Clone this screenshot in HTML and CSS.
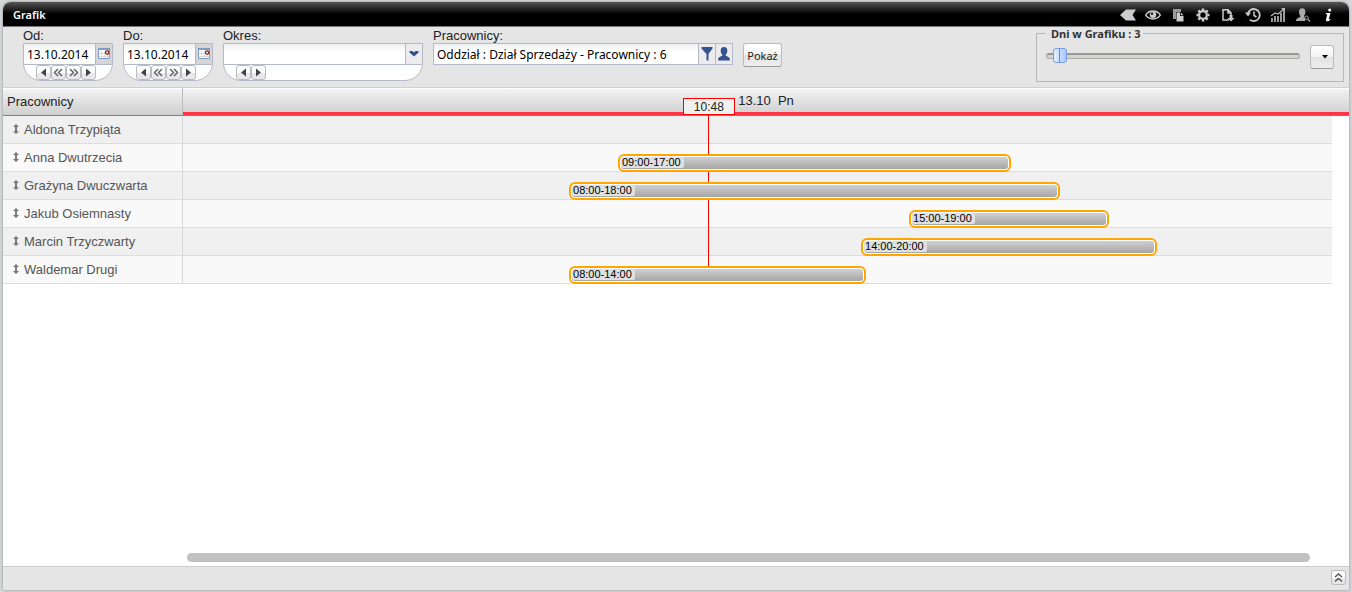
FILE: index.html
```html
<!DOCTYPE html>
<html lang="pl">
<head>
<meta charset="utf-8">
<title>Grafik</title>
<link rel="stylesheet" href="styles.css">
</head>
<body>
<svg class="defs" aria-hidden="true">
  <symbol id="prev" viewBox="0 0 15 15"><path d="M10 3.500v8L5 7.500z" fill="#444"/></symbol>
  <symbol id="next" viewBox="0 0 15 15"><path d="M5 3.500v8l5-4z" fill="#444"/></symbol>
  <symbol id="prev2" viewBox="0 0 15 15"><path d="M7 4L3.500 7.500 7 11M11 4L7.500 7.500 11 11" fill="none" stroke="#666" stroke-width="1.500"/></symbol>
  <symbol id="next2" viewBox="0 0 15 15"><path d="M4 4l3.500 3.500L4 11M8 4l3.500 3.500L8 11" fill="none" stroke="#666" stroke-width="1.500"/></symbol>
  <symbol id="calendar" viewBox="0 0 14 14"><path d="M1.500 1.500h11v10h-11z" fill="#fff" stroke="#7f9cc4"/><path d="M1 1h12v2H1z" fill="#7f9cc4"/><path d="M4.500 4v7M7.500 4v7M10.500 4v7M2 6.500h10M2 9.500h10" stroke="#dadada"/><circle cx="10.200" cy="5.500" r="1.700" fill="#fff" stroke="#8c1010" stroke-width="1.200"/></symbol>
  <symbol id="updown" viewBox="0 0 8 10"><path d="M4 0l3 3H5v4h2l-3 3-3-3h2V3H1z" fill="#777"/></symbol>
</svg>
<div class="window">
  <header class="titlebar">
    <h1 class="title">Grafik</h1>
    <nav class="tools" aria-label="Narzędzia">
      <button class="tool" aria-label="Wstecz"><svg viewBox="0 0 16 16"><path d="M0 8l6-5.500h10L12.500 8l3.500 5.500H6z"/></svg></button>
      <button class="tool" aria-label="Podgląd"><svg viewBox="0 0 16 16"><path d="M.7 8.200C4 2.700 12 2.700 15.300 8.200 12 13.200 4 13.200.7 8.200z" fill="none" stroke="#ccc" stroke-width="1.500"/><circle cx="8" cy="7.700" r="3.300"/><circle cx="7" cy="6.700" r="1.300" fill="#222"/></svg></button>
      <button class="tool" aria-label="Kopiuj"><svg viewBox="0 0 16 16"><path d="M3 2h8v3H6v7H3z" fill="#999"/><path d="M6.500 5.500H10V9h3.500v5.500h-7zM10.800 5.500l2.700 2.700h-2.700z"/></svg></button>
      <button class="tool" aria-label="Ustawienia"><svg viewBox="0 0 16 16"><circle cx="8" cy="8" r="3.800" fill="none" stroke="#ccc" stroke-width="2.200"/><path d="M8 1.500v2M8 12.500v2M1.500 8h2M12.500 8h2M3.400 3.400l1.400 1.400M11.200 11.200l1.400 1.400M3.400 12.600l1.400-1.400M11.200 4.800l1.400-1.400" stroke="#ccc" stroke-width="2.600"/></svg></button>
      <button class="tool" aria-label="Pobierz"><svg viewBox="0 0 16 16"><path d="M9 13H3V2.700h5l3 3V8M8 3v3h3" fill="none" stroke="#ccc" stroke-width="1.500"/><path d="M9.500 8h3v3h2L11 14.500 7.500 11h2z"/></svg></button>
      <button class="tool" aria-label="Historia"><svg viewBox="0 0 16 16"><path d="M2.800 7a6 6 0 1 1 2 5.600" fill="none" stroke="#ccc" stroke-width="1.800"/><path d="M0 5.500h6L3 9.500z"/><path d="M9 4.500V8.500l2.500 1.500" fill="none" stroke="#ccc" stroke-width="1.500"/></svg></button>
      <button class="tool" aria-label="Statystyki"><svg viewBox="0 0 16 16"><path d="M1 11h2v4H1zM4 9h2v6H4zM7 9h2v6H7zM10 6h2v9h-2zM13 4h2v11h-2z" fill="#999"/><path d="M1 9l4-3 3 1 6-5" fill="none" stroke="#bbb" stroke-width="1.200"/><path d="M11 1h4v4z" fill="#bbb"/></svg></button>
      <button class="tool" aria-label="Użytkownik"><svg viewBox="0 0 16 16"><path d="M4 5a3.200 3.700 0 0 1 6.400 0c0 2-.9 3.200-1.400 3.800v1l2 1-1 3.200H1c0-2.500 1.500-3 4.300-4.100v-1C4.800 8.200 4 7 4 5z" fill="#aaa"/><circle cx="11.500" cy="10.800" r="1.800" fill="#111" stroke="#999"/><path d="M12.800 12.200L15 14.500" stroke="#999" stroke-width="1.500"/></svg></button>
      <button class="tool" aria-label="Informacje"><svg viewBox="0 0 16 16"><circle cx="9.700" cy="3" r="1.500" fill="#fff"/><path d="M6 6h4.500l-1.800 6.500 1.800-.6-.3 1C8.500 14.500 5.500 15 6 12.500L7.300 7.300H5.700z" fill="#fff"/></svg></button>
    </nav>
  </header>

  <form class="toolbar">
    <div class="field">
      <label for="from">Od:</label>
      <div class="group date">
        <div class="inputrow"><input id="from" type="text" value="13.10.2014"><button type="button" class="addon cal" aria-label="Kalendarz"><svg class="i14"><use href="#calendar"/></svg></button></div>
        <div class="pager">
          <button type="button" aria-label="Poprzedni dzień"><svg><use href="#prev"/></svg></button><button type="button" aria-label="Poprzedni tydzień"><svg><use href="#prev2"/></svg></button><button type="button" aria-label="Następny tydzień"><svg><use href="#next2"/></svg></button><button type="button" aria-label="Następny dzień"><svg><use href="#next"/></svg></button>
        </div>
      </div>
    </div>
    <div class="field">
      <label for="to">Do:</label>
      <div class="group date">
        <div class="inputrow"><input id="to" type="text" value="13.10.2014"><button type="button" class="addon cal" aria-label="Kalendarz"><svg class="i14"><use href="#calendar"/></svg></button></div>
        <div class="pager">
          <button type="button" aria-label="Poprzedni dzień"><svg><use href="#prev"/></svg></button><button type="button" aria-label="Poprzedni tydzień"><svg><use href="#prev2"/></svg></button><button type="button" aria-label="Następny tydzień"><svg><use href="#next2"/></svg></button><button type="button" aria-label="Następny dzień"><svg><use href="#next"/></svg></button>
        </div>
      </div>
    </div>
    <div class="field">
      <label for="period">Okres:</label>
      <div class="group period">
        <div class="inputrow"><select id="period"><option></option></select><span class="addon"><svg class="i14" viewBox="0 0 14 14"><path d="M2.500 4h3L7 5.500 8.500 4h3v1.500L7 9.500 2.500 5.500z" fill="#2f4f8f"/></svg></span></div>
        <div class="pager">
          <button type="button" aria-label="Poprzedni okres"><svg><use href="#prev"/></svg></button><button type="button" aria-label="Następny okres"><svg><use href="#next"/></svg></button>
        </div>
      </div>
    </div>
    <div class="field">
      <label for="staff">Pracownicy:</label>
      <div class="group staff">
        <div class="inputrow"><input id="staff" type="text" value="Oddział : Dział Sprzedaży - Pracownicy : 6"><button type="button" class="addon" aria-label="Filtr"><svg class="i14" viewBox="0 0 14 14"><path d="M1.500 0h11v1.500L8.500 7v6.500h-2V7l-5-5.500z" fill="#34538f"/></svg></button><button type="button" class="addon" aria-label="Pracownik"><svg class="i14" viewBox="0 0 14 14"><path d="M7 0c2.200 0 3.500 1.500 3.300 4C10.200 6 9.500 7 8.700 7.700v1C11 9.600 13 10 13 13.500H1C1 10 3 9.600 5.300 8.700v-1C4.500 7 3.800 6 3.700 4 3.500 1.500 4.800 0 7 0z" fill="#34538f"/></svg></button></div>
      </div>
    </div>
    <button type="button" class="btn show">Pokaż</button>
    <fieldset class="days">
      <legend><label for="days">Dni w Grafiku : 3</label></legend>
      <input id="days" class="slider" type="range" min="1" max="75" value="3">
      <button type="button" class="btn menu" aria-label="Menu"><svg class="caret" viewBox="0 0 6 4"><path d="M0 0h6L3 3.500z"/></svg></button>
    </fieldset>
  </form>

  <main class="schedule">
    <table class="grid">
      <colgroup><col class="c-name"><col><col class="c-gutter"></colgroup>
      <thead>
        <tr><th class="h-name" scope="col">Pracownicy</th>
        <th class="h-day" colspan="2" scope="col">13.10 &nbsp;Pn<div class="now" style="left:45.1%">10:48</div></th></tr>
      </thead>
      <tbody>
        <tr><th scope="row"><svg class="grip"><use href="#updown"/></svg>Aldona Trzypiąta</th><td class="lane"></td><td class="gutter"></td></tr>
        <tr><th scope="row"><svg class="grip"><use href="#updown"/></svg>Anna Dwutrzecia</th><td class="lane"><div class="bar" style="left:37.86%;width:34.2%"><span>09:00-17:00</span></div></td><td class="gutter"></td></tr>
        <tr><th scope="row"><svg class="grip"><use href="#updown"/></svg>Grażyna Dwuczwarta</th><td class="lane"><div class="bar" style="left:33.6%;width:42.73%"><span>08:00-18:00</span></div></td><td class="gutter"></td></tr>
        <tr><th scope="row"><svg class="grip"><use href="#updown"/></svg>Jakub Osiemnasty</th><td class="lane"><div class="bar" style="left:63.19%;width:17.4%"><span>15:00-19:00</span></div></td><td class="gutter"></td></tr>
        <tr><th scope="row"><svg class="grip"><use href="#updown"/></svg>Marcin Trzyczwarty</th><td class="lane"><div class="bar" style="left:59.01%;width:25.76%"><span>14:00-20:00</span></div></td><td class="gutter"></td></tr>
        <tr><th scope="row"><svg class="grip"><use href="#updown"/></svg>Waldemar Drugi</th><td class="lane"><div class="bar" style="left:33.6%;width:25.85%"><span>08:00-14:00</span></div></td><td class="gutter"></td></tr>
      </tbody>
    </table>
    <div class="scrollbar"></div>
  </main>

  <footer class="footer">
    <button type="button" class="expand" aria-label="Rozwiń"><svg viewBox="0 0 15 15"><path d="M4 7l3.500-3L11 7M4 11.500l3.500-3 3.500 3" fill="none" stroke="#555" stroke-width="1.500"/></svg></button>
  </footer>
</div>
</body>
</html>
```
FILE: styles.css
```css
* { box-sizing: border-box; }

body {
  margin: 0;
  padding: 2px 3px;
  background: #d4d8d8;
  font-family: "Liberation Sans", Arial, sans-serif;
  font-size: 13px;
  color: #222;
}

button { margin: 0; padding: 0; font: inherit; }
svg { display: block; }
.defs { display: none; }

.window {
  display: flex;
  flex-direction: column;
  min-height: calc(100vh - 4px);
  border-radius: 8px 8px 0 0;
  background: #fff;
  box-shadow: 0 0 3px #888;
}

/* Title bar */
.titlebar {
  display: flex;
  align-items: center;
  justify-content: space-between;
  height: 24px;
  padding: 0 13px 0 10px;
  border-radius: 8px 8px 0 0;
  background: linear-gradient(#555, #111 40%, #000 50%);
}
.title {
  margin: 0;
  font: 600 11px "Noto Sans", sans-serif;
  color: #fff;
}
.tools { display: flex; gap: 9px; padding-top: 2px; }
.tool {
  width: 16px;
  height: 16px;
  border: 0;
  background: none;
}
.tool svg { width: 16px; height: 16px; fill: #ccc; }

/* Toolbar */
.toolbar {
  display: flex;
  align-items: flex-start;
  gap: 10px;
  height: 61px;
  padding: 2px 5px 0 20px;
  border-top: 1px solid #777;
  background: #e5e5e5;
}
.field > label { display: block; height: 14px; line-height: 14px; }
.group {
  overflow: hidden;
  border: 1px solid #b5b8c8;
  border-radius: 0 0 18px 18px;
  background: #fff;
}
.date { width: 90px; }
.period { width: 200px; }
.staff { width: 300px; border-radius: 0; }
.inputrow {
  display: flex;
  height: 20px;
  background: linear-gradient(#eef1f1, #fff 8px);
}
.inputrow input, .inputrow select {
  flex: 1;
  min-width: 0;
  padding: 0 3px;
  border: 0;
  background: none;
  font: 12px "Noto Sans", sans-serif;
  color: #000;
}
.inputrow select { appearance: none; }
.addon {
  display: flex;
  align-items: center;
  justify-content: center;
  width: 17px;
  border: 0;
  border-left: 1px solid #b5b8c8;
  background: #ececee;
}
.cal { background: #d5d5d8; }
.i14 { width: 14px; height: 14px; flex: none; }
.pager {
  display: flex;
  height: 16px;
  padding-left: 12px;
  border-top: 1px solid #b5b8c8;
}
.pager button, .expand {
  width: 15px;
  height: 15px;
  border: 1px solid #bbb;
  border-radius: 3px;
  background: linear-gradient(#fff 50%, #e8e8e8 50%);
}
.pager svg, .expand svg { width: 15px; height: 15px; margin: -1px; }

.btn {
  border: 1px solid #bbb;
  border-bottom-color: #999;
  border-radius: 3px;
  background: linear-gradient(#fff, #f3f3f3 50%, #e2e2e2 50%, #eee);
  font: 11px "Noto Sans", sans-serif;
  color: #222;
}
.show { width: 39px; height: 24px; margin-top: 14px; }

.days {
  display: flex;
  align-items: flex-start;
  gap: 10px;
  width: 308px;
  height: 55px;
  margin: -2px 0 0 auto;
  padding: 5px 9px 0;
  border: 1px solid #b5b8b8;
}
.days legend {
  margin-left: 0;
  padding: 0 3px 0 5px;
  font: bold 11px/13px "Noto Sans", sans-serif;
  color: #333;
}
.slider {
  flex: 1;
  min-width: 0;
  height: 15px;
  margin: 3px 0 0;
  appearance: none;
  background: none;
}
.slider::-webkit-slider-runnable-track {
  height: 6px;
  border: 1px solid #aaa;
  border-top: 2px solid #999;
  border-radius: 3px;
  background: #d5d5d0;
}
.slider::-webkit-slider-thumb {
  appearance: none;
  width: 14px;
  height: 15px;
  margin-top: -7px;
  border: 1px solid #7a9ee0;
  border-radius: 3px;
  background: linear-gradient(90deg, transparent 5px, #6588d0 5px, #6588d0 6px, transparent 6px), linear-gradient(90deg, #e4f0ff, #a9c8ff);
}
.menu {
  display: flex;
  align-items: center;
  justify-content: flex-end;
  width: 24px;
  height: 24px;
  padding-right: 5px;
}
.caret { width: 6px; height: 4px; }

/* Schedule */
.schedule {
  display: flex;
  flex: 1;
  flex-direction: column;
  justify-content: space-between;
}
.grid {
  width: 100%;
  table-layout: fixed;
  border-collapse: separate;
  border-spacing: 0;
}
.c-name { width: 180px; }
.c-gutter { width: 17px; }
.grid th, .grid td { padding: 0; font-weight: normal; }
.grid thead th {
  height: 29px;
  border-top: 1px solid #d0d0d0;
  border-bottom: 1px solid #808080;
  background: linear-gradient(#fff 1px, #f2f2f2 1px, #cfcfcf);
}
.grid .h-name {
  padding-left: 4px;
  border-right: 1px solid #bbb;
  text-align: left;
}
.grid .h-day {
  position: relative;
  padding-bottom: 2px;
  box-shadow: inset 0 -3px #ff3344;
}
.now {
  position: absolute;
  bottom: 0;
  z-index: 1;
  width: 52px;
  height: 17px;
  margin-left: -26px;
  border: 1px solid #f00;
  background: #f0f0f0;
  font-size: 12px;
  line-height: 17px;
}
/* Current-time line running down from the time box */
.now::after {
  content: "";
  position: absolute;
  top: 100%;
  left: 24px;
  width: 1px;
  height: 152px;
  background: #f00;
}
.grid tbody th {
  height: 28px;
  padding-left: 9px;
  border-right: 1px solid #d8d8d8;
  border-bottom: 1px solid #ddd;
  text-align: left;
  color: #555;
}
.lane { position: relative; border-bottom: 1px solid #ddd; }
.grid tbody tr { background: #f9f9f9; }
.grid tbody tr:nth-child(odd) { background: #f0f0f0; }
.gutter { background: #fff; }
.grip {
  display: inline-block;
  width: 8px;
  height: 10px;
  margin-right: 4px;
}
.bar {
  position: absolute;
  top: 10px;
  z-index: 2;
  display: flex;
  height: 18px;
  padding: 1px;
  border: 2px solid #ffa500;
  border-radius: 6px;
  background: linear-gradient(#d0d0d0, #a6a6a6) content-box, #fff;
}
.bar span {
  height: 11px;
  padding: 0 3px 0 1px;
  border-radius: 2px;
  background: #e0e0e0;
  font-size: 11px;
  line-height: 11px;
  color: #000;
}
.scrollbar {
  height: 9px;
  margin: 0 39px 4px 184px;
  border-radius: 5px;
  background: #c1c1c1;
}

.footer {
  display: flex;
  justify-content: flex-end;
  height: 24px;
  padding: 3px 3px 0;
  border-top: 1px solid #ccc;
  background: #e5e5e5;
}
```
